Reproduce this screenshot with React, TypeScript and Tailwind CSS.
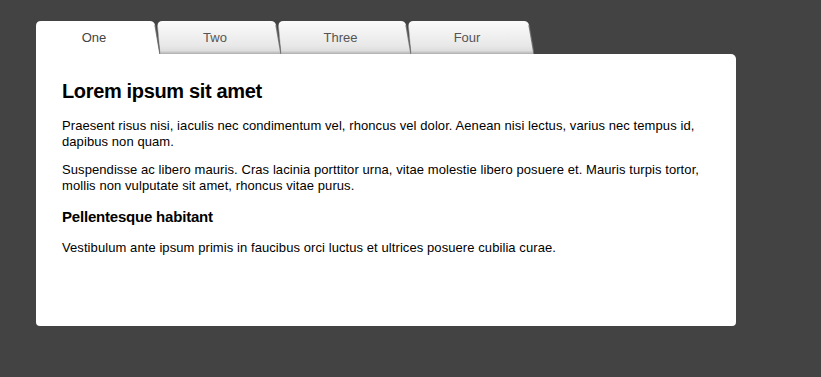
import { useState } from 'react';

interface Tab {
  label: string;
  width: number;
  widthClass: string;
  zClass: string;
}

const tabs: Tab[] = [
  { label: 'One', width: 124, widthClass: 'w-[124px]', zClass: 'z-40' },
  { label: 'Two', width: 124, widthClass: 'w-[124px]', zClass: 'z-30' },
  { label: 'Three', width: 133, widthClass: 'w-[133px]', zClass: 'z-20' },
  { label: 'Four', width: 126, widthClass: 'w-[126px]', zClass: 'z-10' },
];

function TabShape({ width, active, id }: { width: number; active: boolean; id: string }) {
  const w = width;
  const d = active
    ? `M0,35 V5 Q0,0 5,0 H${w - 10} Q${w - 6},0 ${w - 5},4 L${w},35 Z`
    : `M3,33 L0.5,5 Q0.5,0 5.5,0 H${w - 10} Q${w - 6},0 ${w - 5},4 L${w},33 Z`;
  return (
    <svg className="absolute left-0 top-0" width={w} height={35} viewBox={`0 0 ${w} 35`}>
      <defs>
        <linearGradient id={id} x1="0" y1="0" x2="0" y2="1">
          <stop offset="0" stopColor="#fbfbfb" />
          <stop offset="0.75" stopColor="#e8e8e8" />
          <stop offset="0.9" stopColor="#dedede" />
          <stop offset="1" stopColor="#aeaeae" />
        </linearGradient>
      </defs>
      <path d={d} fill={active ? '#ffffff' : `url(#${id})`} />
      <path d={`M${w - 5},4 L${w},33`} stroke="#666" strokeWidth={1.4} strokeOpacity={0.8} fill="none" />
      {!active && <path d="M3,33 L0.5,5" stroke="#9a9a9a" strokeWidth={1} strokeOpacity={0.6} fill="none" />}
    </svg>
  );
}

export default function App() {
  const [active, setActive] = useState(0);

  return (
    <div className="min-h-screen bg-[#434343] pl-[36px] pt-[21px] font-['Liberation_Sans',Arial,sans-serif]">
      <div className="flex h-[33px] items-stretch">
        {tabs.map((tab, i) => (
          <button
            key={tab.label}
            onClick={() => setActive(i)}
            className={`relative h-[33px] shrink-0 ${tab.widthClass} ${i === active ? 'z-50' : tab.zClass} ${
              i === 0 ? '' : '-ml-[3px]'
            }`}
          >
            <TabShape width={tab.width} active={i === active} id={`tabgrad-${i}`} />
            <span
              className={`relative block pr-[8px] text-center text-[13px] leading-[33px] ${
                i === active ? 'text-[#444]' : 'text-[#555]'
              }`}
            >
              {tab.label}
            </span>
          </button>
        ))}
      </div>

      <div className="relative z-0 h-[272px] w-[700px] rounded-tr-[5px] rounded-b-[4px] bg-white px-[26px] pt-[25px] text-[13px] leading-[16px] tracking-[0.08px] text-black">
        <h2 className="mb-[15px] text-[20px] font-bold leading-[24px] tracking-[-0.35px]">Lorem ipsum sit amet</h2>
        <p className="mb-[12px]">
          Praesent risus nisi, iaculis nec condimentum vel, rhoncus vel dolor. Aenean nisi lectus, varius nec tempus id,
          dapibus non quam.
        </p>
        <p className="mb-[14px]">
          Suspendisse ac libero mauris. Cras lacinia porttitor urna, vitae molestie libero posuere et. Mauris turpis
          tortor, mollis non vulputate sit amet, rhoncus vitae purus.
        </p>
        <h3 className="mb-[14px] text-[15px] font-bold leading-[18px] tracking-[-0.2px]">Pellentesque habitant</h3>
        <p>Vestibulum ante ipsum primis in faucibus orci luctus et ultrices posuere cubilia curae.</p>
      </div>
    </div>
  );
}
